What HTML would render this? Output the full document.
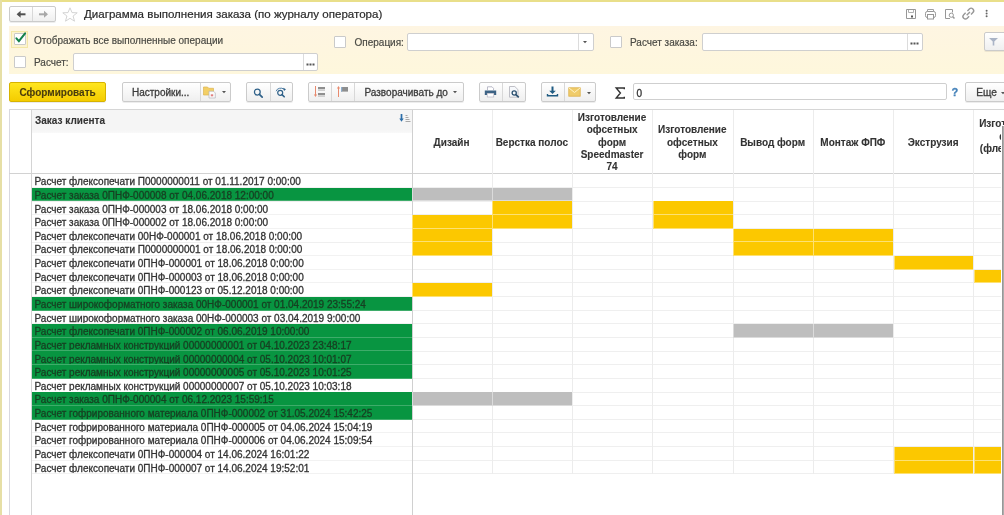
<!DOCTYPE html>
<html><head><meta charset="utf-8">
<style>
*{box-sizing:border-box;margin:0;padding:0}
html,body{width:1004px;height:515px;overflow:hidden;background:#fff;font-family:"Liberation Sans",sans-serif;color:#333}
.a{position:absolute}
svg.a{overflow:visible}
.btn{position:absolute;border:1px solid #cbcbcb;border-radius:2px;background:linear-gradient(#fff,#efefef);box-shadow:0 1px 0 rgba(0,0,0,.07)}
.sep{position:absolute;top:0;bottom:0;width:1px;background:#d8d8d8}
.t10{font-size:10px;white-space:nowrap;line-height:12px}
.cb{position:absolute;width:12px;height:12px;border:1px solid #cacaca;background:#fff;border-radius:1px}
.inp{position:absolute;border:1px solid #cfcfcf;background:#fff;border-radius:2px}
.hb{font-size:10px;font-weight:bold;white-space:nowrap;line-height:12px;color:#333}
.hdr{position:absolute;top:111.3px;height:63.2px;padding-right:2.2px;font-size:10px;font-weight:bold;line-height:12.3px;text-align:center;color:#333;display:flex;align-items:center;justify-content:center;overflow:hidden;white-space:nowrap}
.row{position:absolute;left:32px;width:380px;height:13.636px;font-size:10px;line-height:13px;padding-top:1.05px;padding-left:2.5px;white-space:nowrap;color:#333;overflow:hidden;border-bottom:1px solid rgba(255,255,255,.22)}
.g{background:#089541;color:#173f22}
.cell{position:absolute;height:13.636px;border-bottom:1px solid rgba(255,255,255,.45);border-left:1px solid rgba(255,255,255,.45)}
.y{background:#fcc800}
.gr{background:#bebebe}
#w{position:absolute;left:0;top:0;width:1004px;height:515px;will-change:transform;filter:blur(0.3px)}
#w *{-webkit-text-stroke:0.3px currentColor}
#w .hb,#w .hdr{-webkit-text-stroke:0.1px currentColor}

</style></head><body><div id="w">
<div class="a" style="left:0;top:0;width:1004px;height:1.5px;background:#e9df8a"></div>
<div class="a" style="left:0;top:0;width:1.7px;height:515px;background:#e6dfa6"></div>

<!-- title bar -->
<div class="btn" style="left:9px;top:6px;width:47px;height:16px"><div class="sep" style="left:22px"></div></div>
<svg class="a" style="left:16px;top:10px" width="11" height="9" viewBox="0 0 11 9"><path d="M2 4.3H9.5" stroke="#505050" stroke-width="2" fill="none"/><path d="M0.6 4.3L4.6 0.8V7.8Z" fill="#505050"/></svg>
<svg class="a" style="left:38px;top:10px" width="11" height="9" viewBox="0 0 11 9"><path d="M1 4.3H8.5" stroke="#a8a8a8" stroke-width="2" fill="none"/><path d="M10 4.3L6 0.8V7.8Z" fill="#a8a8a8"/></svg>
<svg class="a" style="left:62px;top:7px" width="16" height="15" viewBox="0 0 16 15"><path d="M8 0.8L10 5.6L15.2 5.8L11.1 9L12.5 14.2L8 11.3L3.5 14.2L4.9 9L0.8 5.8L6 5.6Z" stroke="#cfcfcf" stroke-width="0.9" fill="none"/></svg>
<div class="a t10" style="left:84px;top:6.6px;font-size:11.55px;line-height:14px;color:#2a2a2a;-webkit-text-stroke:0.2px #2a2a2a">Диаграмма выполнения заказа (по журналу оператора)</div>
<!-- right title icons -->
<svg class="a" style="left:905px;top:8px" width="85" height="12" viewBox="0 0 85 12">
 <g fill="none" stroke="#979797" stroke-width="1">
  <path d="M1.5 1.5H10.5V10.5H1.5Z"/><path d="M3.5 2V4.5H8.5V2" stroke="#b0b0b0"/><rect x="6" y="7.5" width="2" height="2" fill="#555" stroke="none"/>
  <path d="M22.5 1.5H28.5V3.5M22.5 1.5V3.5" stroke="#a0a0a0"/><rect x="20.5" y="3.5" width="10" height="6" rx="1.8"/><rect x="22.5" y="6.5" width="6" height="4.5" fill="#fff"/>
  <path d="M45 10.5H40.5V1.5H47.5V4.5"/><circle cx="46.3" cy="7.2" r="2.1"/><path d="M47.8 8.8L49.5 10.5" stroke-width="1.5"/>
  <g transform="rotate(-45 63.3 5.6)" stroke-width="1.4"><path d="M62 3.1H59.3A2.5 2.5 0 0 0 59.3 8.1H62"/><path d="M64.6 3.1H67.3A2.5 2.5 0 0 1 67.3 8.1H64.6"/><path d="M61 5.6H65.6"/></g>
 </g>
 <g fill="#666"><circle cx="81.6" cy="2.8" r="1"/><circle cx="81.6" cy="5.5" r="1"/><circle cx="81.6" cy="8.2" r="1"/></g>
</svg>

<!-- filter panel -->
<div class="a" style="left:9px;top:26px;width:995px;height:47.5px;background:linear-gradient(#fef5e2,#fef7dc)"></div>
<div class="a" style="left:11px;top:30.7px;width:17px;height:17px;border:1px solid #f3e7a6;background:#fcf3d0"></div>
<div class="cb" style="left:14px;top:33px"></div>
<svg class="a" style="left:14px;top:31px" width="14" height="13" viewBox="0 0 14 13"><path d="M2.4 7.3L4.9 10.1L11.1 2.4" stroke="#14814b" stroke-width="2" fill="none" stroke-linecap="round"/></svg>
<div class="a t10" style="left:34px;top:34.6px;color:#4a4a44;-webkit-text-stroke:0.18px #4a4a44">Отображать все выполненные операции</div>
<div class="cb" style="left:334px;top:35.5px"></div>
<div class="a t10" style="left:354.5px;top:36.5px;color:#4a4a44;-webkit-text-stroke:0.18px #4a4a44">Операция:</div>
<div class="inp" style="left:407px;top:33px;width:186.5px;height:17.5px"><div class="sep" style="left:169.5px;background:#dcdcdc"></div></div>
<svg class="a" style="left:582px;top:40px" width="6" height="4" viewBox="0 0 6 4"><path d="M1 1H5L3 3.2Z" fill="#555"/></svg>
<div class="cb" style="left:609.5px;top:35.5px"></div>
<div class="a t10" style="left:630px;top:36.5px;color:#4a4a44;-webkit-text-stroke:0.18px #4a4a44">Расчет заказа:</div>
<div class="inp" style="left:701.5px;top:33px;width:221px;height:17.5px"><div class="sep" style="left:204.5px;background:#dcdcdc"></div></div>
<svg class="a" style="left:910px;top:42px" width="9" height="3" viewBox="0 0 9 3"><rect x="0.5" y="0.5" width="2" height="2" fill="#555"/><rect x="3.5" y="0.5" width="2" height="2" fill="#555"/><rect x="6.5" y="0.5" width="2" height="2" fill="#555"/></svg>
<div class="btn" style="left:984px;top:32px;width:30px;height:19px"></div>
<svg class="a" style="left:988px;top:37px" width="11" height="9" viewBox="0 0 11 9"><path d="M1 1H10L6.3 4.6V8.5H4.7V4.6Z" fill="#aab4c6"/></svg>
<div class="cb" style="left:14px;top:56px"></div>
<div class="a t10" style="left:34px;top:56.8px;color:#4a4a44;-webkit-text-stroke:0.18px #4a4a44">Расчет:</div>
<div class="inp" style="left:72.5px;top:53.2px;width:245.5px;height:17.5px"><div class="sep" style="left:229px;background:#dcdcdc"></div></div>
<svg class="a" style="left:306px;top:63px" width="9" height="3" viewBox="0 0 9 3"><rect x="0.5" y="0.5" width="2" height="2" fill="#555"/><rect x="3.5" y="0.5" width="2" height="2" fill="#555"/><rect x="6.5" y="0.5" width="2" height="2" fill="#555"/></svg>

<!-- toolbar -->
<div class="a" style="left:9px;top:82px;width:97px;height:19.5px;border:1px solid #d7b300;border-radius:2px;background:linear-gradient(#ffe620,#f4cc00);box-shadow:0 1px 0 rgba(0,0,0,.08)"></div>
<div class="a t10" style="left:19.5px;top:86.6px;font-weight:bold;color:#4a3d0e;-webkit-text-stroke:0.1px #4a3d0e">Сформировать</div>
<div class="btn" style="left:121.5px;top:82px;width:109.5px;height:19.5px"><div class="sep" style="left:77px"></div></div>
<div class="a t10" style="left:132px;top:86.7px;color:#3c3c3c">Настройки...</div>
<svg class="a" style="left:203px;top:86px" width="14" height="13" viewBox="0 0 14 13"><path d="M0.5 1H4.5L5.8 2.3H10.5V9H0.5Z" fill="#f3cf66" stroke="#dcb452" stroke-width="0.7"/><path d="M6 5.2H10.5L12.3 7V12H6Z" fill="#fbfbfb" stroke="#b4b4bc" stroke-width="0.7"/><rect x="7.8" y="8.3" width="2.4" height="2" fill="#e08080"/></svg>
<svg class="a" style="left:221px;top:90px" width="6" height="4" viewBox="0 0 6 4"><path d="M1 1H5L3 3.2Z" fill="#555"/></svg>
<div class="btn" style="left:246px;top:82px;width:47px;height:19.5px"><div class="sep" style="left:22.5px"></div></div>
<svg class="a" style="left:252.5px;top:87.5px" width="12" height="11" viewBox="0 0 12 11"><circle cx="4.3" cy="4.1" r="2.9" fill="none" stroke="#2f6189" stroke-width="1.25"/><path d="M6.4 6.3L9.2 9.1" stroke="#2f6189" stroke-width="1.7" stroke-linecap="round"/></svg>
<svg class="a" style="left:275px;top:86.5px" width="12" height="12" viewBox="0 0 12 12"><circle cx="5.2" cy="5.8" r="2.5" fill="none" stroke="#2f6189" stroke-width="1.2"/><path d="M7 7.6L9.2 9.8" stroke="#2f6189" stroke-width="1.6" stroke-linecap="round"/><path d="M1.2 4.2A4.6 3.6 0 0 1 9 2.2" fill="none" stroke="#4f7fa6" stroke-width="1"/><path d="M8.2 0.8L11 2.2L9 4Z" fill="#2f6189"/></svg>
<div class="btn" style="left:308px;top:82px;width:156px;height:19.5px"><div class="sep" style="left:22.2px"></div><div class="sep" style="left:45.2px"></div></div>
<svg class="a" style="left:313px;top:85px" width="14" height="13" viewBox="0 0 14 13"><path d="M2.5 1V10.5" stroke="#e88a6e" stroke-width="1"/><path d="M0.9 9.5H4.1L2.5 12Z" fill="#e88a6e"/><rect x="5" y="2" width="7" height="2.2" fill="#8e8e8e"/><rect x="5" y="4.4" width="7" height="1.6" fill="#cfcfcf"/><rect x="5" y="8" width="7" height="2.2" fill="#8e8e8e"/><rect x="5" y="10.4" width="7" height="1.6" fill="#cfcfcf"/></svg>
<svg class="a" style="left:336px;top:85px" width="14" height="13" viewBox="0 0 14 13"><path d="M2.5 2.5V12" stroke="#e88a6e" stroke-width="1"/><path d="M0.9 3.5H4.1L2.5 1Z" fill="#e88a6e"/><rect x="5" y="2" width="7" height="4.6" fill="#8e8e8e"/><rect x="5" y="2" width="1.2" height="4.6" fill="#8fb0d0"/></svg>
<div class="a t10" style="left:364.5px;top:86.7px;color:#3c3c3c">Разворачивать до</div>
<svg class="a" style="left:452px;top:90px" width="6" height="4" viewBox="0 0 6 4"><path d="M1 1H5L3 3.2Z" fill="#555"/></svg>
<div class="btn" style="left:479px;top:82px;width:47px;height:19.5px"><div class="sep" style="left:22px"></div></div>
<svg class="a" style="left:484px;top:86px" width="13" height="12" viewBox="0 0 13 12"><path d="M3.5 4V0.8H8L9.5 2.3V4" fill="#fff" stroke="#aab" stroke-width="0.8"/><path d="M0.8 4.5H12.2V9H10V7H3V9H0.8Z" fill="#3d6385"/><rect x="3.2" y="7.5" width="6.6" height="3.5" fill="#fff" stroke="#aab" stroke-width="0.6"/></svg>
<svg class="a" style="left:509px;top:86px" width="12" height="12" viewBox="0 0 12 12"><path d="M0.5 0.5H5.8L9 3.7V11.2H0.5Z" fill="#f6f8fb" stroke="#b8b8c0" stroke-width="0.9"/><circle cx="5.2" cy="7" r="2.1" fill="none" stroke="#2a4f6e" stroke-width="1.3"/><path d="M6.8 8.6L9.8 11.4" stroke="#2a4f6e" stroke-width="1.6"/></svg>
<div class="btn" style="left:541px;top:82px;width:55px;height:19.5px"><div class="sep" style="left:22px"></div></div>
<svg class="a" style="left:546px;top:86px" width="13" height="11" viewBox="0 0 13 11"><path d="M6.5 0.5V6" stroke="#1f5b82" stroke-width="2"/><path d="M3.2 4.8H9.8L6.5 8Z" fill="#1f5b82"/><path d="M1.5 8V9.8H11.5V8" fill="none" stroke="#1f5b82" stroke-width="1.4"/></svg>
<svg class="a" style="left:568px;top:87px" width="13" height="10" viewBox="0 0 13 10"><rect x="0.8" y="0.8" width="11.4" height="8.4" fill="#f0cc6a" stroke="#dcb04a" stroke-width="0.8"/><path d="M0.8 0.8L6.5 5.5L12.2 0.8" fill="none" stroke="#fff3c8" stroke-width="1"/></svg>
<svg class="a" style="left:585.5px;top:90.5px" width="6" height="4" viewBox="0 0 6 4"><path d="M1 1H5L3 3.2Z" fill="#555"/></svg>
<svg class="a" style="left:614.5px;top:87px" width="11" height="12" viewBox="0 0 11 12"><path d="M9.3 2.2V1H1.2L5.4 6L1.2 11H9.3V9.8" fill="none" stroke="#333" stroke-width="1.4"/></svg>
<div class="inp" style="left:633px;top:83.2px;width:314px;height:17.2px"></div>
<div class="a t10" style="left:636.5px;top:87.5px;color:#333">0</div>
<div class="a" style="left:951.5px;top:85px;font-size:11px;font-weight:bold;color:#4683ba;line-height:14px">?</div>
<div class="btn" style="left:965px;top:82px;width:45px;height:19.5px"></div>
<div class="a t10" style="left:976.3px;top:86.6px;color:#3c3c3c;font-size:10.2px">Еще</div>
<svg class="a" style="left:1000px;top:90.5px" width="6" height="4" viewBox="0 0 6 4"><path d="M1 1H5L3 3.2Z" fill="#555"/></svg>


<div class="a" style="left:9px;top:109px;width:995px;height:1px;background:#d6d6d6"></div>
<div class="a" style="left:9px;top:109px;width:1px;height:406px;background:#d8d8e0"></div>
<div class="a" style="left:32px;top:110px;width:380px;height:23px;background:linear-gradient(#f5f5f5 85%,#f9f9f9)"></div>
<div class="a hb" style="left:35px;top:115px;text-align:left">Заказ клиента</div>
<svg class="a" style="left:398.5px;top:113.5px" width="13" height="9" viewBox="0 0 13 9"><path d="M2.5 0V5.5" stroke="#2d6ea8" stroke-width="1.7"/><path d="M0.3 4.6H4.7L2.5 7.8Z" fill="#2d6ea8"/><rect x="6.5" y="1" width="2" height="1" fill="#a8a8a8"/><rect x="6.5" y="3" width="3" height="1" fill="#a8a8a8"/><rect x="6.5" y="5" width="4" height="1" fill="#a8a8a8"/><rect x="6.5" y="7" width="5" height="1" fill="#a8a8a8"/></svg>

<div class="a" style="left:9px;top:173.2px;width:994px;height:1px;background:#d2d2d2"></div>
<div class="a" style="left:32px;top:187.04px;width:969px;height:1px;background:#efefef"></div>
<div class="a" style="left:32px;top:200.67px;width:969px;height:1px;background:#efefef"></div>
<div class="a" style="left:32px;top:214.31px;width:969px;height:1px;background:#efefef"></div>
<div class="a" style="left:32px;top:227.94px;width:969px;height:1px;background:#efefef"></div>
<div class="a" style="left:32px;top:241.58px;width:969px;height:1px;background:#efefef"></div>
<div class="a" style="left:32px;top:255.22px;width:969px;height:1px;background:#efefef"></div>
<div class="a" style="left:32px;top:268.85px;width:969px;height:1px;background:#efefef"></div>
<div class="a" style="left:32px;top:282.49px;width:969px;height:1px;background:#efefef"></div>
<div class="a" style="left:32px;top:296.12px;width:969px;height:1px;background:#efefef"></div>
<div class="a" style="left:32px;top:309.76px;width:969px;height:1px;background:#efefef"></div>
<div class="a" style="left:32px;top:323.40px;width:969px;height:1px;background:#efefef"></div>
<div class="a" style="left:32px;top:337.03px;width:969px;height:1px;background:#efefef"></div>
<div class="a" style="left:32px;top:350.67px;width:969px;height:1px;background:#efefef"></div>
<div class="a" style="left:32px;top:364.30px;width:969px;height:1px;background:#efefef"></div>
<div class="a" style="left:32px;top:377.94px;width:969px;height:1px;background:#efefef"></div>
<div class="a" style="left:32px;top:391.58px;width:969px;height:1px;background:#efefef"></div>
<div class="a" style="left:32px;top:405.21px;width:969px;height:1px;background:#efefef"></div>
<div class="a" style="left:32px;top:418.85px;width:969px;height:1px;background:#efefef"></div>
<div class="a" style="left:32px;top:432.48px;width:969px;height:1px;background:#efefef"></div>
<div class="a" style="left:32px;top:446.12px;width:969px;height:1px;background:#efefef"></div>
<div class="a" style="left:32px;top:459.76px;width:969px;height:1px;background:#efefef"></div>
<div class="a" style="left:32px;top:473.39px;width:969px;height:1px;background:#efefef"></div>
<div class="a" style="left:491.77px;top:110px;width:1px;height:364px;background:#ececec"></div>
<div class="a" style="left:572.04px;top:110px;width:1px;height:364px;background:#ececec"></div>
<div class="a" style="left:652.31px;top:110px;width:1px;height:364px;background:#ececec"></div>
<div class="a" style="left:732.58px;top:110px;width:1px;height:364px;background:#ececec"></div>
<div class="a" style="left:812.85px;top:110px;width:1px;height:364px;background:#ececec"></div>
<div class="a" style="left:893.12px;top:110px;width:1px;height:364px;background:#ececec"></div>
<div class="a" style="left:973.39px;top:110px;width:1px;height:364px;background:#ececec"></div>
<div class="a" style="left:31px;top:110px;width:1px;height:405px;background:#d4d4d4"></div>
<div class="a" style="left:411.5px;top:110px;width:1px;height:405px;background:#d0d0d0"></div>
<div class="hdr" style="left:412.50px;width:80.27px">Дизайн</div>
<div class="hdr" style="left:492.77px;width:80.27px">Верстка полос</div>
<div class="hdr" style="left:573.04px;width:80.27px">Изготовление<br>офсетных<br>форм<br>Speedmaster<br>74</div>
<div class="hdr" style="left:653.31px;width:80.27px">Изготовление<br>офсетных<br>форм</div>
<div class="hdr" style="left:733.58px;width:80.27px">Вывод форм</div>
<div class="hdr" style="left:813.85px;width:80.27px">Монтаж ФПФ</div>
<div class="hdr" style="left:894.12px;width:80.27px">Экструзия</div>
<div class="hdr" style="left:974.39px;width:80.27px">Изготовление<br>форм<br>(флекс. ФПФ)<br>ФПФ</div>
<div class="row" style="top:174.20px">Расчет флексопечати П0000000011 от 01.11.2017 0:00:00</div>
<div class="row g" style="top:187.84px">Расчет заказа 0ПНФ-000008 от 04.06.2018 12:00:00</div>
<div class="cell gr" style="left:412.00px;top:187.84px;width:79.77px"></div>
<div class="cell gr" style="left:492.27px;top:187.84px;width:79.77px"></div>
<div class="row" style="top:201.47px">Расчет заказа 0ПНФ-000003 от 18.06.2018 0:00:00</div>
<div class="cell y" style="left:492.27px;top:201.47px;width:79.77px"></div>
<div class="cell y" style="left:652.81px;top:201.47px;width:79.77px"></div>
<div class="row" style="top:215.11px">Расчет заказа 0ПНФ-000002 от 18.06.2018 0:00:00</div>
<div class="cell y" style="left:412.00px;top:215.11px;width:79.77px"></div>
<div class="cell y" style="left:492.27px;top:215.11px;width:79.77px"></div>
<div class="cell y" style="left:652.81px;top:215.11px;width:79.77px"></div>
<div class="row" style="top:228.74px">Расчет флексопечати 00НФ-000001 от 18.06.2018 0:00:00</div>
<div class="cell y" style="left:412.00px;top:228.74px;width:79.77px"></div>
<div class="cell y" style="left:733.08px;top:228.74px;width:79.77px"></div>
<div class="cell y" style="left:813.35px;top:228.74px;width:79.77px"></div>
<div class="row" style="top:242.38px">Расчет флексопечати П0000000001 от 18.06.2018 0:00:00</div>
<div class="cell y" style="left:412.00px;top:242.38px;width:79.77px"></div>
<div class="cell y" style="left:733.08px;top:242.38px;width:79.77px"></div>
<div class="cell y" style="left:813.35px;top:242.38px;width:79.77px"></div>
<div class="row" style="top:256.02px">Расчет флексопечати 0ПНФ-000001 от 18.06.2018 0:00:00</div>
<div class="cell y" style="left:893.62px;top:256.02px;width:79.77px"></div>
<div class="row" style="top:269.65px">Расчет флексопечати 0ПНФ-000003 от 18.06.2018 0:00:00</div>
<div class="cell y" style="left:973.89px;top:269.65px;width:27.11px"></div>
<div class="row" style="top:283.29px">Расчет флексопечати 0ПНФ-000123 от 05.12.2018 0:00:00</div>
<div class="cell y" style="left:412.00px;top:283.29px;width:79.77px"></div>
<div class="row g" style="top:296.92px">Расчет широкоформатного заказа 00НФ-000001 от 01.04.2019 23:55:24</div>
<div class="row" style="top:310.56px">Расчет широкоформатного заказа 00НФ-000003 от 03.04.2019 9:00:00</div>
<div class="row g" style="top:324.20px">Расчет флексопечати 0ПНФ-000002 от 06.06.2019 10:00:00</div>
<div class="cell gr" style="left:733.08px;top:324.20px;width:79.77px"></div>
<div class="cell gr" style="left:813.35px;top:324.20px;width:79.77px"></div>
<div class="row g" style="top:337.83px">Расчет рекламных конструкций 00000000001 от 04.10.2023 23:48:17</div>
<div class="row g" style="top:351.47px">Расчет рекламных конструкций 00000000004 от 05.10.2023 10:01:07</div>
<div class="row g" style="top:365.10px">Расчет рекламных конструкций 00000000005 от 05.10.2023 10:01:25</div>
<div class="row" style="top:378.74px">Расчет рекламных конструкций 00000000007 от 05.10.2023 10:03:18</div>
<div class="row g" style="top:392.38px">Расчет заказа 0ПНФ-000004 от 06.12.2023 15:59:15</div>
<div class="cell gr" style="left:412.00px;top:392.38px;width:79.77px"></div>
<div class="cell gr" style="left:492.27px;top:392.38px;width:79.77px"></div>
<div class="row g" style="top:406.01px">Расчет гофрированного материала 0ПНФ-000002 от 31.05.2024 15:42:25</div>
<div class="row" style="top:419.65px">Расчет гофрированного материала 0ПНФ-000005 от 04.06.2024 15:04:19</div>
<div class="row" style="top:433.28px">Расчет гофрированного материала 0ПНФ-000006 от 04.06.2024 15:09:54</div>
<div class="row" style="top:446.92px">Расчет флексопечати 0ПНФ-000004 от 14.06.2024 16:01:22</div>
<div class="cell y" style="left:893.62px;top:446.92px;width:79.77px"></div>
<div class="cell y" style="left:973.89px;top:446.92px;width:27.11px"></div>
<div class="row" style="top:460.56px">Расчет флексопечати 0ПНФ-000007 от 14.06.2024 19:52:01</div>
<div class="cell y" style="left:893.62px;top:460.56px;width:79.77px"></div>
<div class="cell y" style="left:973.89px;top:460.56px;width:27.11px"></div>
<div class="a" style="left:1001px;top:125px;width:3px;height:390px;background:#fff"></div>
<div class="a" style="left:1002px;top:125.5px;width:2px;height:390px;background:linear-gradient(90deg,#8c8c8c,#b8b8b8)"></div>
</div></body></html>
